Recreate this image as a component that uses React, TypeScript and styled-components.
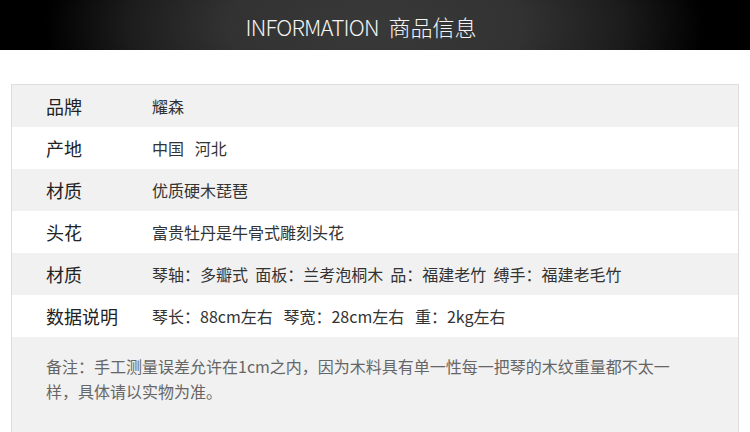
import React from "react";
import styled, { createGlobalStyle } from "styled-components";

const GlobalStyle = createGlobalStyle`
  html, body {
    margin: 0;
    padding: 0;
    background: #ffffff;
  }
  body {
    font-family: "Noto Sans CJK SC", "Noto Sans", sans-serif;
    width: 750px;
    height: 432px;
    overflow: hidden;
  }
`;

const Page = styled.div`
  width: 750px;
  height: 432px;
  display: flex;
  flex-direction: column;
  background: #fff;
`;

const Banner = styled.header`
  height: 50px;
  flex: none;
  display: flex;
  align-items: center;
  justify-content: center;
  background: radial-gradient(ellipse 330px 140px at 50% 50%, #393939 0%, #323232 45%, #1c1c1c 75%, #000 100%);
`;

const Title = styled.h1`
  margin: 0;
  font-family: "Noto Sans CJK SC", sans-serif;
  font-weight: 300;
  font-size: 22px;
  line-height: 1;
  color: #f4f4f4;
  white-space: pre;
  transform: translate(-14px, 1px);
`;

const Latin = styled.span`
  letter-spacing: -0.8px;
`;

const Table = styled.section`
  margin: 34px 11px 0 11px;
  flex: 1;
  display: flex;
  flex-direction: column;
  border: 1px solid #dedede;
  border-bottom: none;
`;

const Row = styled.div<{ $shade: boolean }>`
  height: 42px;
  flex: none;
  display: grid;
  grid-template-columns: 106px 1fr;
  align-items: center;
  padding-left: 34px;
  background: ${(p) => (p.$shade ? "#f1f1f1" : "#ffffff")};
`;

const Label = styled.div`
  font-size: 18px;
  color: #222;
  line-height: 1;
  white-space: pre;
`;

const Value = styled.div`
  font-size: 16px;
  color: #333;
  line-height: 1;
  white-space: pre;
`;

const Note = styled.div`
  flex: 1;
  background: #f1f1f1;
  padding: 17px 66px 0 34px;
  font-size: 16px;
  line-height: 25px;
  color: #666;
`;

const rows: { label: string; value: string }[] = [
  { label: "品牌", value: "耀森" },
  { label: "产地", value: "中国   河北" },
  { label: "材质", value: "优质硬木琵琶" },
  { label: "头花", value: "富贵牡丹是牛骨式雕刻头花" },
  { label: "材质", value: "琴轴：多瓣式  面板：兰考泡桐木  品：福建老竹  缚手：福建老毛竹" },
  { label: "数据说明", value: "琴长：88cm左右   琴宽：28cm左右   重：2kg左右" },
];

export default function App() {
  return (
    <Page>
      <GlobalStyle />
      <Banner>
        <Title>
          <Latin>INFORMATION</Latin>{"  商品信息"}
        </Title>
      </Banner>
      <Table>
        {rows.map((r, i) => (
          <Row key={i} $shade={i % 2 === 0}>
            <Label>{r.label}</Label>
            <Value>{r.value}</Value>
          </Row>
        ))}
        <Note>
          备注：手工测量误差允许在1cm之内，因为木料具有单一性每一把琴的木纹重量都不太一样，具体请以实物为准。
        </Note>
      </Table>
    </Page>
  );
}
